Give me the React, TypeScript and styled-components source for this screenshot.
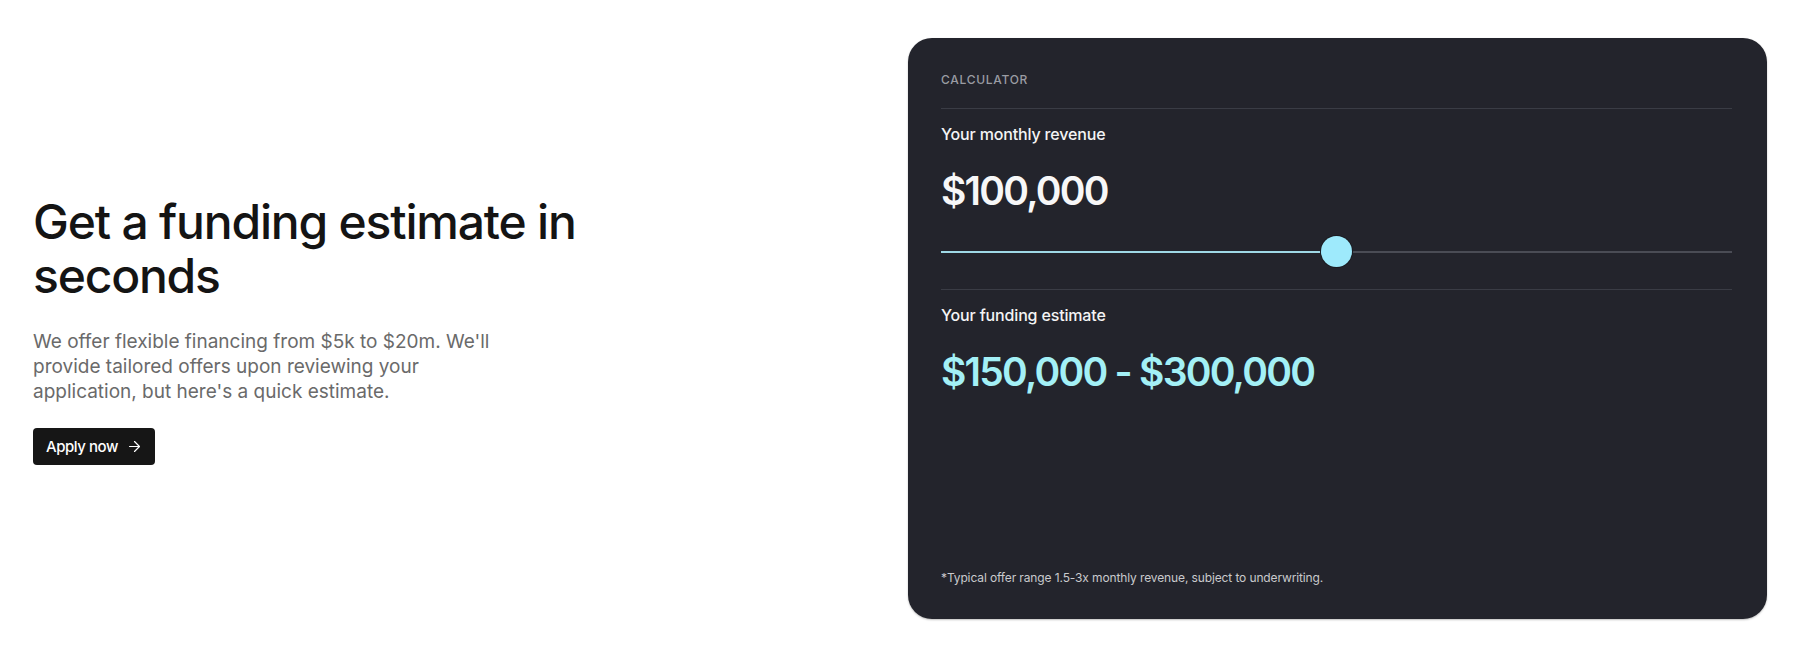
import React, { useState } from 'react'
import styled, { createGlobalStyle } from 'styled-components'
import { ArrowRight } from 'lucide-react'

const GlobalStyle = createGlobalStyle`
  html, body {
    margin: 0;
    padding: 0;
    background: #ffffff;
  }

  body {
    font-family: Inter, "Noto Sans", "Liberation Sans", sans-serif;
    -webkit-font-smoothing: antialiased;
  }

  * {
    box-sizing: border-box;
  }
`

const formatMoney = (n: number) => '$' + n.toLocaleString('en-US')

const App = () => {
  const [revenue] = useState(100000)
  const min = 0
  const max = 200000
  const pct = ((revenue - min) / (max - min)) * 100

  return (
    <>
      <GlobalStyle />
      <Page>
        <Intro>
          <Heading>Get a funding estimate in seconds</Heading>
          <Lead>
            We offer flexible financing from $5k to $20m. We'll provide tailored offers upon
            reviewing your application, but here's a quick estimate.
          </Lead>
          <ApplyButton>
            Apply now <ArrowRight size={17} strokeWidth={1.7} />
          </ApplyButton>
        </Intro>

        <Card>
          <Eyebrow>CALCULATOR</Eyebrow>
          <Divider />
          <Label>Your monthly revenue</Label>
          <Amount>{formatMoney(revenue)}</Amount>
          <Slider>
            <Track />
            <TrackFill style={{ width: `${pct}%` }} />
            <Thumb style={{ left: `${pct}%` }} />
          </Slider>
          <Divider />
          <Label>Your funding estimate</Label>
          <Amount $accent>
            {formatMoney(revenue * 1.5)} - {formatMoney(revenue * 3)}
          </Amount>
          <Footnote>*Typical offer range 1.5-3x monthly revenue, subject to underwriting.</Footnote>
        </Card>
      </Page>
    </>
  )
}

export default App

const Page = styled.div`
  display: grid;
  grid-template-columns: 1fr 1fr;
  gap: 16px;
  padding: 38px 33px 37px;
  height: 656px;
`

const Intro = styled.div`
  display: flex;
  flex-direction: column;
  justify-content: center;
  align-items: flex-start;
  padding-top: 2px;
`

const Heading = styled.h1`
  margin: 0;
  max-width: 560px;
  font-size: 48px;
  line-height: 54px;
  font-weight: 500;
  letter-spacing: -0.025em;
  color: #141414;
`

const Lead = styled.p`
  margin: 26px 0 0;
  max-width: 470px;
  font-size: 19px;
  line-height: 25px;
  font-weight: 400;
  letter-spacing: 0;
  color: #6a6a6a;
`

const ApplyButton = styled.button`
  display: inline-flex;
  align-items: center;
  gap: 8px;
  margin-top: 24px;
  height: 37px;
  padding: 0 12px 0 13px;
  border: none;
  border-radius: 4px;
  background: #161616;
  color: #ffffff;
  font-family: inherit;
  font-size: 15px;
  font-weight: 500;
  letter-spacing: -0.03em;
  cursor: pointer;
`

const Card = styled.div`
  display: flex;
  flex-direction: column;
  padding: 34px 35px 33px 33px;
  border-radius: 24px;
  background: #23242c;
  box-shadow: 0 1px 2px rgba(0, 0, 0, 0.25);
`

const Eyebrow = styled.div`
  align-self: flex-start;
  font-size: 12px;
  line-height: 16px;
  font-weight: 500;
  letter-spacing: 0.06em;
  color: #9a9ca3;
  margin-bottom: 20px;
`

const Divider = styled.div`
  height: 1px;
  background: #3a3c45;
`

const Label = styled.div`
  margin-top: 14px;
  font-size: 16px;
  line-height: 22px;
  font-weight: 500;
  letter-spacing: -0.01em;
  color: #f4f4f5;
`

const Amount = styled.div<{ $accent?: boolean }>`
  margin-top: 22px;
  font-size: 39px;
  line-height: 48px;
  font-weight: 600;
  letter-spacing: -0.045em;
  color: ${p => (p.$accent ? '#a3f0f6' : '#f7f7f8')};
`

const Slider = styled.div`
  position: relative;
  height: 31px;
  margin: 21px 0 22px;
`

const Track = styled.div`
  position: absolute;
  left: 0;
  right: 0;
  top: 15px;
  height: 2px;
  background: #4a4c55;
`

const TrackFill = styled.div`
  position: absolute;
  left: 0;
  top: 15px;
  height: 2px;
  background: #9fd9e6;
`

const Thumb = styled.div`
  position: absolute;
  top: 0;
  width: 31px;
  height: 31px;
  margin-left: -15.5px;
  border-radius: 50%;
  background: #9eeafc;
  box-shadow: 0 0 0 1px #1a1b21;
`

const Footnote = styled.div`
  margin-top: auto;
  font-size: 12px;
  line-height: 16px;
  letter-spacing: -0.01em;
  color: #c9cacd;
`
